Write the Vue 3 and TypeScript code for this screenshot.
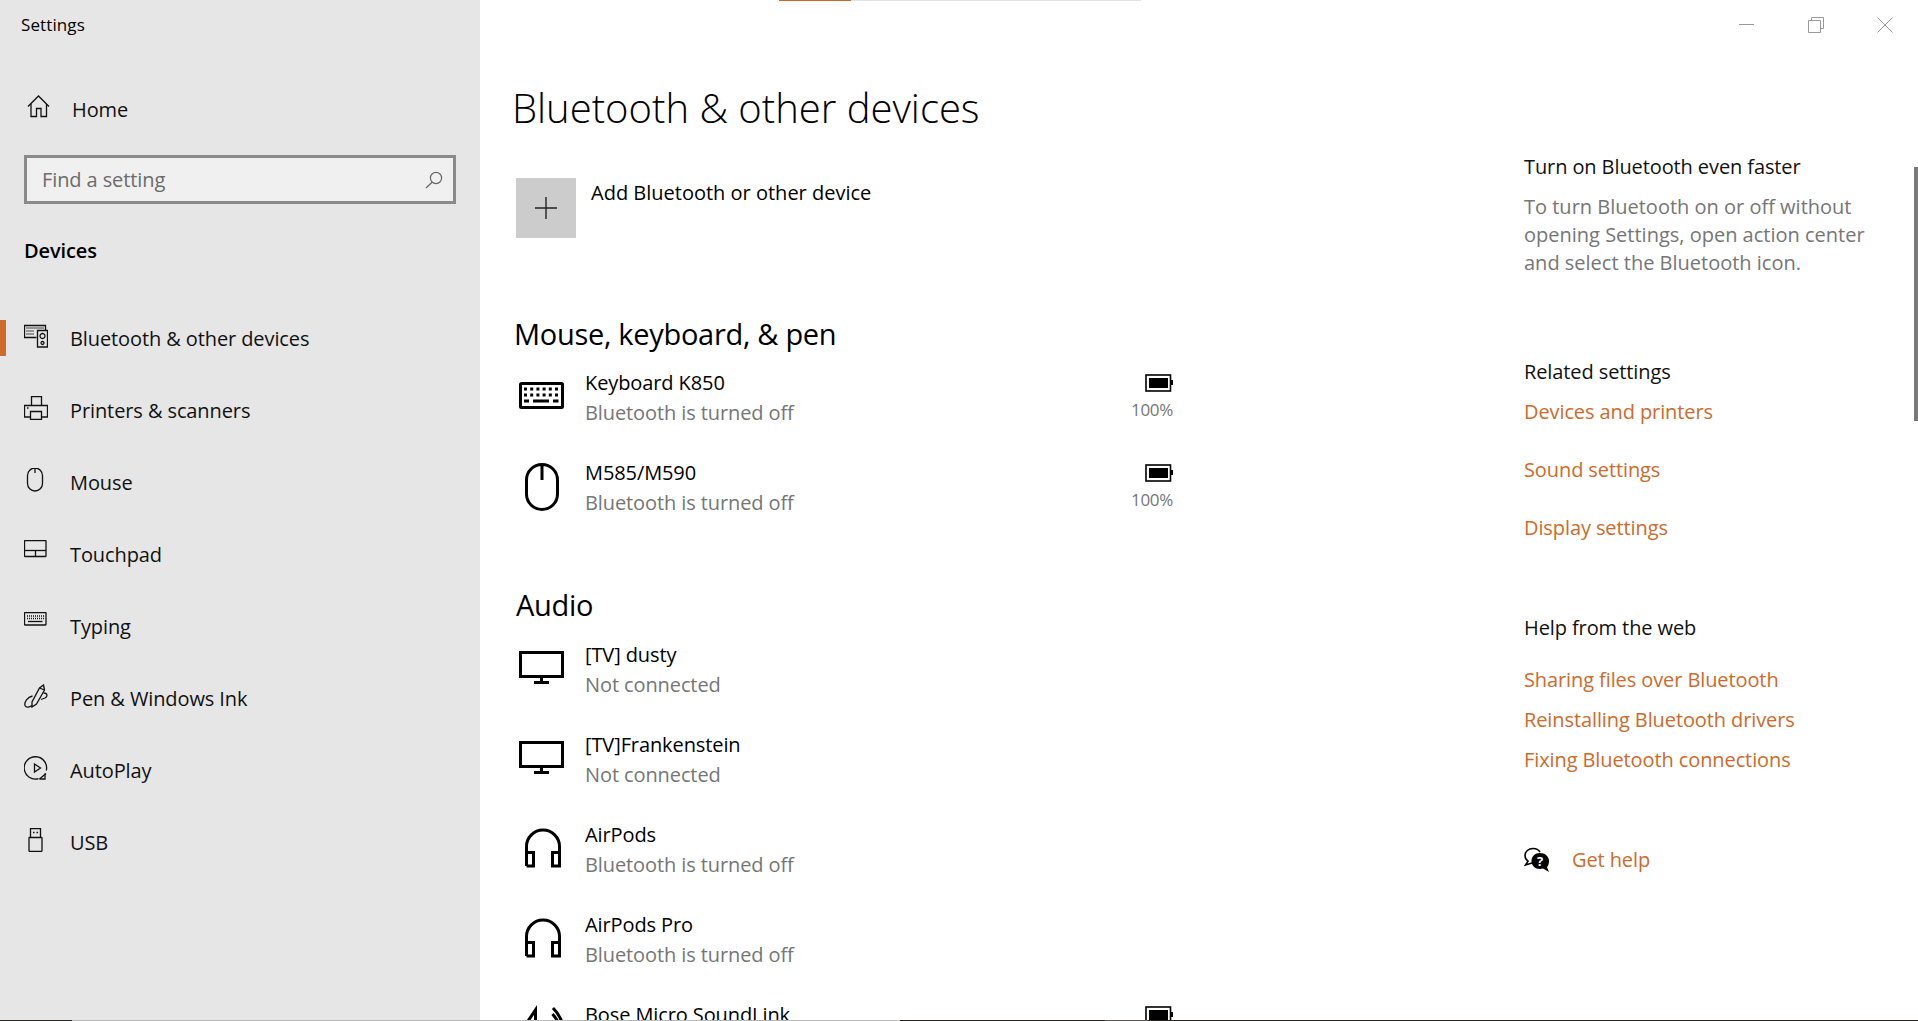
<template>
  <div class="window">
    <aside class="sidebar">
      <div class="app-title">Settings</div>
      <div class="home-row">
        <svg class="nav-icon" width="24" height="24" viewBox="0 0 24 24">
          <path v-for="d in navIcons.home" :key="d" :d="d" />
        </svg>
        <span>Home</span>
      </div>
      <div class="search">
        <span>Find a setting</span>
        <svg width="18" height="18" viewBox="0 0 18 18">
          <circle cx="11" cy="7" r="5.6" />
          <path d="M7 11.2L1 17" />
        </svg>
      </div>
      <h2 class="group-title">Devices</h2>
      <nav>
        <div v-for="item in navItems" :key="item.label" class="nav-row" :class="{ active: item.active }">
          <svg class="nav-icon" width="24" height="24" viewBox="0 0 24 24">
            <path v-for="d in navIcons[item.icon]" :key="d" :d="d" />
          </svg>
          <span>{{ item.label }}</span>
        </div>
      </nav>
    </aside>

    <main class="content">
      <section class="devices">
        <h1>Bluetooth &amp; other devices</h1>
        <div class="add-row">
          <div class="add-tile">
            <svg width="24" height="24" viewBox="0 0 24 24"><path d="M12 1V23M1 12H23" /></svg>
          </div>
          <span>Add Bluetooth or other device</span>
        </div>

        <template v-for="group in groups" :key="group.title">
          <h3 :class="group.cls">{{ group.title }}</h3>
          <div v-for="dev in group.devices" :key="dev.name" class="device">
            <svg class="device-icon" width="46" height="60" viewBox="0 0 46 60">
              <path v-for="d in deviceIcons[dev.icon]" :key="d" :d="d" />
            </svg>
            <div class="device-text">
              <div class="device-name">{{ dev.name }}</div>
              <div class="device-status">{{ dev.status }}</div>
            </div>
            <div v-if="dev.battery" class="battery">
              <svg width="28" height="18" viewBox="0 0 28 18">
                <rect class="battery-shell" x="1" y="1" width="24.5" height="16" />
                <rect class="battery-fill" x="4" y="4" width="19" height="10" />
                <rect class="battery-fill" x="26" y="6" width="2" height="5" />
              </svg>
              <span>100%</span>
            </div>
          </div>
        </template>
      </section>

      <section class="related">
        <div class="side-head">Turn on Bluetooth even faster</div>
        <p>To turn Bluetooth on or off without opening Settings, open action center and select the Bluetooth icon.</p>

        <div class="side-head related-head">Related settings</div>
        <a v-for="link in relatedLinks" :key="link" class="link spaced">{{ link }}</a>

        <div class="side-head web-head">Help from the web</div>
        <div class="web-links">
          <a v-for="link in webLinks" :key="link" class="link">{{ link }}</a>
        </div>

        <div class="get-help">
          <svg width="26" height="26" viewBox="0 0 26 26">
            <path class="bubble-line" d="M9 1.500C4.500 1.500 1 4.500 1 8.500C1 11 2.300 13 4 14.200L1.500 18L8 16" />
            <path class="bubble-line" d="M9 1.500C12 1.500 14.500 2.500 16 5" />
            <path class="bubble-fill" d="M16 6C11 6 7.500 9.500 7.500 14C7.500 18.500 11 22 16 22C17 22 18 21.800 19 21.500L25 25L23 20C24.500 18.500 25 16 25 14C25 9.500 21 6 16 6Z" />
            <text x="16" y="19" text-anchor="middle">?</text>
          </svg>
          <a class="link">Get help</a>
        </div>
      </section>
    </main>

    <!-- stuff floating over the page -->
    <div class="loading-bar"></div>
    <div class="window-controls">
      <svg width="16" height="16" viewBox="0 0 16 16"><path d="M0 7.5H15" /></svg>
      <svg width="16" height="16" viewBox="0 0 16 16"><path d="M3.5 3.5V.5H15.5V11.5H12.5M.5 3.5H12.5V15.5H.5Z" /></svg>
      <svg width="16" height="16" viewBox="0 0 16 16"><path d="M.5 .5L15.5 15.5M15.5 .5L.5 15.5" /></svg>
    </div>
    <div class="scroll-thumb"></div>
    <div class="bottom-edge"></div>
  </div>
</template>

<script setup lang="ts">
interface NavItem {
  label: string
  icon: string
  active?: boolean
}

interface Device {
  name: string
  status: string
  icon: string
  battery?: boolean
}

const OFF = 'Bluetooth is turned off'

// dotted key rows for the keyboard glyphs
const keyRow = (x: number, y: number, n: number, step: number, len = 1) =>
  Array.from({ length: n }, (_, i) => `M${x + i * step} ${y}h${len}`).join('')

const navIcons: Record<string, string[]> = {
  home: ['M4 11.5L14.5 1L25 11.5', 'M7 9V21.5H12.5V13.5H17V21.5H22.5V9'],
  bluetooth: [
    'M12.5 13.5H.5V1.5H21.5V6',
    'M13.5 6.5H23.5V23H13.5Z',
    'M18.5 9.5a2.5 2.5 0 1 0 .01 0Z',
    'M18.5 17.5a1.5 1.5 0 1 0 .01 0Z',
    keyRow(2.5, 4, 9, 2),
    keyRow(2.5, 7, 4, 2),
    keyRow(2.5, 10, 4, 2)
  ],
  printer: [
    'M7.5 9V.5H17.5V9',
    'M6.5 21V15.5H17.5V23.5H6.5V21',
    'M6.5 21H.5V9.5H23.5V21H17.5',
    'M3 12h1.5'
  ],
  mouse: ['M3.5 7.5a7.5 7.5 0 0 1 15 0V15.5a7.5 7.5 0 0 1 -15 0ZM11 0V5'],
  touchpad: ['M1 .5H21.5a.5 .5 0 0 1 .5 .5V16a.5 .5 0 0 1 -.5 .5H1a.5 .5 0 0 1 -.5 -.5V1a.5 .5 0 0 1 .5 -.5Z', 'M.5 10.5H22', 'M11.5 10.5V16.5'],
  typing: [
    'M1 .5H21.5a.5 .5 0 0 1 .5 .5V12.5a.5 .5 0 0 1 -.5 .5H1a.5 .5 0 0 1 -.5 -.5V1a.5 .5 0 0 1 .5 -.5Z',
    keyRow(3, 4, 9, 2),
    keyRow(3, 6.5, 9, 2),
    'M4 9.5H18.5'
  ],
  pen: [
    'M19.5 1L20.5 6L12.5 20L8 23L8 18L15.5 4Z',
    'M15.5 4L20.5 6',
    'M8.5 12C3.5 13 0 18 1 21.5C2 24 5.5 23.5 8 21.5',
    'M19.5 9C23.5 9 24 12.5 21 14L17 15.5'
  ],
  autoplay: [
    'M14.5 22.7A11.2 11.2 0 1 1 22.3 14.5',
    'M21 17.5V23H15.5',
    'M10.5 8L16.5 12L10.5 16Z',
    'M22 17.5L15.5 23'
  ],
  usb: [
    'M6.5 9V.5H16.5V9',
    'M6 9.5H17.5a.5 .5 0 0 1 .5 .5V22.5a1 1 0 0 1 -1 1H6a1 1 0 0 1 -1 -1V10a.5 .5 0 0 1 .5 -.5Z',
    'M9 4.5h1.5M12.5 4.5h1.5'
  ]
}

const deviceIcons: Record<string, string[]> = {
  keyboard: [
    'M2.5 15.5H42.5a1 1 0 0 1 1 1V38.5a1 1 0 0 1 -1 1H2.5a1 1 0 0 1 -1 -1V16.5a1 1 0 0 1 1 -1Z',
    keyRow(5, 21, 6, 6.2, 3),
    keyRow(5, 27, 6, 6.2, 3),
    'M5 33H10M14 33H30M34 33H39.5'
  ],
  mouse: ['M7.5 22a15.5 15.5 0 0 1 31 0V36a15.5 15.5 0 0 1 -31 0ZM23 6.5V22'],
  monitor: ['M1.5 12.5H43.5V36.5H1.5Z', 'M22.5 37V42.5', 'M15 42.5H30'],
  headphones: [
    'M7.5 46V26.5a16.5 16.5 0 0 1 33 0V46H33.5V32.5H40.5',
    'M7.5 32.5H14.5V46H7.5'
  ],
  speaker: ['M7 24L16.5 10V24', 'M34 8C38 12 41.5 17 43.5 24', 'M33.5 14C36 17 38.5 20 39.5 24']
}

const navItems: NavItem[] = [
  { label: 'Bluetooth & other devices', icon: 'bluetooth', active: true },
  { label: 'Printers & scanners', icon: 'printer' },
  { label: 'Mouse', icon: 'mouse' },
  { label: 'Touchpad', icon: 'touchpad' },
  { label: 'Typing', icon: 'typing' },
  { label: 'Pen & Windows Ink', icon: 'pen' },
  { label: 'AutoPlay', icon: 'autoplay' },
  { label: 'USB', icon: 'usb' }
]

const groups: { title: string; cls: string; devices: Device[] }[] = [
  {
    title: 'Mouse, keyboard, & pen',
    cls: 'first-head',
    devices: [
      { name: 'Keyboard K850', status: OFF, icon: 'keyboard', battery: true },
      { name: 'M585/M590', status: OFF, icon: 'mouse', battery: true }
    ]
  },
  {
    title: 'Audio',
    cls: 'audio-head',
    devices: [
      { name: '[TV] dusty', status: 'Not connected', icon: 'monitor' },
      { name: '[TV]Frankenstein', status: 'Not connected', icon: 'monitor' },
      { name: 'AirPods', status: OFF, icon: 'headphones' },
      { name: 'AirPods Pro', status: OFF, icon: 'headphones' },
      { name: 'Bose Micro SoundLink', status: OFF, icon: 'speaker', battery: true }
    ]
  }
]

const relatedLinks = ['Devices and printers', 'Sound settings', 'Display settings']
const webLinks = ['Sharing files over Bluetooth', 'Reinstalling Bluetooth drivers', 'Fixing Bluetooth connections']
</script>

<style>
html,
body {
  margin: 0;
  overflow: hidden;
}
</style>

<style scoped>
.window {
  position: relative;
  display: flex;
  width: 1918px;
  height: 1021px;
  overflow: hidden;
  background: #fff;
  color: #000;
  font-family: "Open Sans", "Noto Sans", sans-serif;
  font-size: 20px;
  letter-spacing: -0.1px;
}

.sidebar {
  width: 480px;
  flex-shrink: 0;
  background: #e6e6e6;
}

.app-title {
  padding-left: 21px;
  font-size: 17px;
  line-height: 50px;
  letter-spacing: 0.1px;
}

.home-row,
.nav-row {
  display: flex;
  align-items: center;
  height: 72px;
  padding-left: 24px;
  color: #111;
}

.home-row {
  margin-top: 23px;
}

.home-row span {
  margin-left: 24px;
}

.home-row svg {
  overflow: visible;
}

.nav-row {
  position: relative;
}

.nav-row span {
  margin-left: 22px;
}

.nav-row.active::before {
  content: "";
  position: absolute;
  left: 0;
  top: 18px;
  width: 6px;
  height: 36px;
  background: #ce6a2b;
}

.nav-icon {
  flex-shrink: 0;
  margin-top: -4px;
}

.nav-icon path {
  fill: none;
  stroke: #111;
  stroke-width: 1.3;
}

.search {
  display: flex;
  align-items: center;
  justify-content: space-between;
  box-sizing: border-box;
  width: 432px;
  height: 49px;
  margin: 10px 0 0 24px;
  padding: 0 10px 0 15px;
  border: 3px solid #8a8a8a;
  background: #f0f0f0;
  color: #6b6b6b;
}

.search svg {
  fill: none;
  stroke: #666;
  stroke-width: 1.2;
}

.group-title {
  margin: 27px 0 31px 24px;
  font-size: 20px;
  font-weight: 600;
  line-height: 40px;
}

.content {
  display: flex;
  flex: 1;
  min-width: 0;
}

.devices {
  width: 660px;
  flex-shrink: 0;
  padding: 78px 0 0 33px;
}

h1 {
  margin: 0 0 0 -1px;
  font-size: 40px;
  font-weight: 300;
  line-height: 60px;
  letter-spacing: 0;
}

.add-row {
  display: flex;
  gap: 15px;
  margin: 40px 0 0 3px;
  line-height: 30px;
  letter-spacing: 0;
}

.add-tile {
  display: flex;
  align-items: center;
  justify-content: center;
  width: 60px;
  height: 60px;
  background: #ccc;
}

.add-tile path {
  fill: none;
  stroke: #222;
  stroke-width: 1.4;
}

h3 {
  margin: 0 0 14px;
  font-size: 29px;
  font-weight: 400;
  line-height: 40px;
  letter-spacing: -0.3px;
}

.first-head {
  margin-top: 76px;
  margin-left: 1px;
}

.audio-head {
  margin-top: 37px;
  margin-bottom: 15px;
  margin-left: 3px;
}

.device {
  display: flex;
  height: 90px;
}

.device-icon {
  flex-shrink: 0;
  margin: 0 20px 0 6px;
}

.device-icon path {
  fill: none;
  stroke: #000;
  stroke-width: 3;
}

.device-name,
.device-status {
  line-height: 30px;
}

.device-status {
  color: #767676;
}

.battery {
  display: flex;
  flex-direction: column;
  align-items: flex-end;
  margin-left: auto;
  padding-top: 6px;
  font-size: 17px;
  line-height: 22px;
  letter-spacing: -0.3px;
  color: #767676;
}

.battery svg {
  margin-bottom: 7px;
}

.battery-shell {
  fill: none;
  stroke: #000;
  stroke-width: 1.6;
}

.battery-fill {
  fill: #000;
}

.related {
  width: 365px;
  margin-left: 351px;
  padding-top: 153px;
  line-height: 28px;
}

.related p {
  margin: 12px 0 0;
  color: #767676;
  letter-spacing: 0;
}

.side-head {
  color: #111;
}

.related-head {
  margin-top: 81px;
}

.web-head {
  margin-top: 72px;
}

.link {
  display: block;
  color: #ce6a2b;
}

.spaced {
  margin-top: 30px;
}

.related-head + .spaced {
  margin-top: 12px;
}

.web-links {
  display: flex;
  flex-direction: column;
  gap: 12px;
  margin-top: 24px;
}

.get-help {
  display: flex;
  align-items: center;
  gap: 22px;
  margin-top: 72px;
}

.bubble-line {
  fill: none;
  stroke: #000;
  stroke-width: 1.6;
}

.bubble-fill {
  fill: #000;
}

.get-help text {
  fill: #fff;
  font-size: 13px;
  font-weight: 700;
}

.loading-bar {
  position: absolute;
  top: 0;
  left: 779px;
  width: 362px;
  height: 1px;
  background: linear-gradient(to right, #d1662b 72px, #e2e2e2 72px);
}

.window-controls {
  position: absolute;
  top: 17px;
  left: 1739px;
  display: flex;
  gap: 53px;
}

.window-controls path {
  fill: none;
  stroke: #999;
  stroke-width: 1;
}

.scroll-thumb {
  position: absolute;
  top: 167px;
  right: 0;
  width: 4px;
  height: 254px;
  background: #7a7a7a;
}

.bottom-edge {
  position: absolute;
  left: 0;
  right: 0;
  bottom: 0;
  height: 1px;
  background: linear-gradient(
    to right,
    #2a2420 72px,
    #b8b8b8 72px,
    #b8b8b8 900px,
    #2a2420 900px,
    #2a2420 1105px,
    #5c5856 1105px,
    #5c5856 1148px,
    #2a2420 1148px
  );
}
</style>
